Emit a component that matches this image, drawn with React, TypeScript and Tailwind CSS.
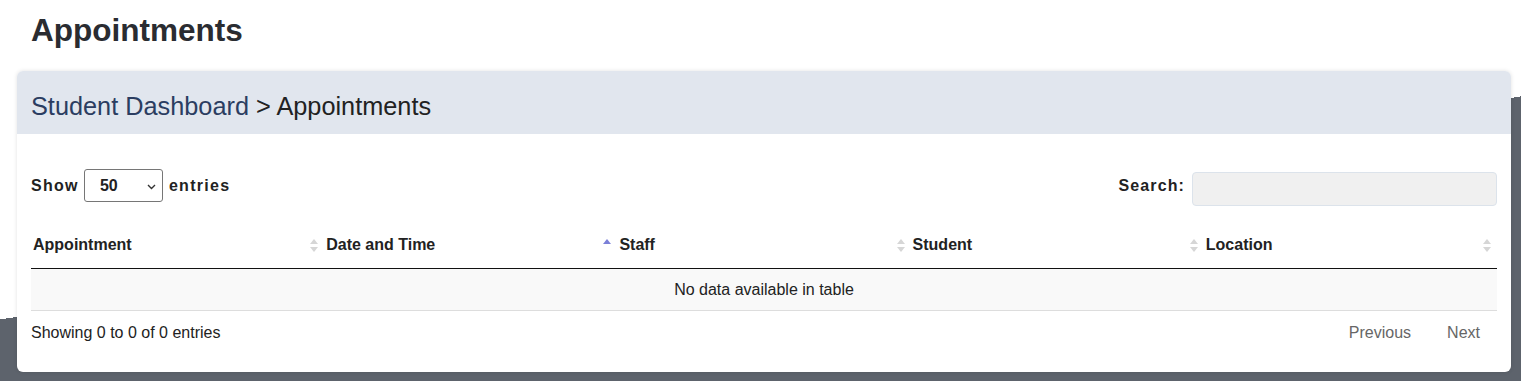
import React from "react";

const columns = ["Appointment", "Date and Time", "Staff", "Student", "Location"];

const SortIcon = ({ active }: { active?: boolean }) => {
    return (
        <svg width="8" height="15" viewBox="0 0 8 15" className="shrink-0">
            {active ? (
                <path d="M0 6 L4 1 L8 6 Z" fill="#7b80d8" />
            ) : (
                <>
                    <path d="M0 6 L4 1 L8 6 Z" fill="#d6d6d6" />
                    <path d="M0 9 L4 14 L8 9 Z" fill="#d6d6d6" />
                </>
            )}
        </svg>
    );
};

const App: React.FC = () => {
    return (
        <div className="min-h-screen w-full bg-[linear-gradient(171.66deg,#ffffff_316px,#5d636c_316px)] font-['Liberation_Sans',Arial,sans-serif] text-[#222]">
            {/* PAGE TITLE */}
            <h1 className="pl-[31px] pt-[12px] text-[31.5px] leading-[37px] font-bold text-[#2a2c31]">Appointments</h1>

            {/* CARD */}
            <div className="mx-[17px] mt-[22px] w-[1494px] rounded-[6px] bg-white shadow-[0_0_4px_rgba(0,0,0,0.12)]">
                <div className="flex h-[63px] items-center rounded-t-[6px] bg-[#e1e6ee] px-[14px] pt-[9px] text-[25.3px]">
                    <span className="text-[#2b3d61]">Student Dashboard</span>
                    <span className="ml-[7px] text-[#222]">&gt; Appointments</span>
                </div>

                <div className="px-[14px] pt-[35px] pb-[21px]">
                    {/* CONTROLS */}
                    <div className="flex items-start justify-between">
                        <div className="flex h-[33px] items-center text-[16px] font-bold tracking-[1.3px] text-[#222]">
                            <span>Show</span>
                            <div className="relative ml-[5px] mr-[6px] flex h-[33px] w-[79px] items-center rounded-[3px] border border-[#767676] pl-[15px] tracking-normal">
                                <span className="text-[16px] font-bold">50</span>
                                <svg width="9" height="6" viewBox="0 0 9 6" className="absolute right-[6px] top-[14px]">
                                    <path d="M1 1 L4.5 4.5 L8 1" fill="none" stroke="#333" strokeWidth="1.4" />
                                </svg>
                            </div>
                            <span>entries</span>
                        </div>
                        <div className="flex items-start">
                            <span className="h-[33px] text-[16px] leading-[33px] font-bold tracking-[1.1px]">Search:</span>
                            <div className="ml-[7px] mt-[3px] h-[34px] w-[305px] rounded-[4px] border border-[#dce3eb] bg-[#f0f0f0]"></div>
                        </div>
                    </div>

                    {/* TABLE */}
                    <div className="mt-[16px]">
                        <div className="grid grid-cols-5 border-b border-[#111]">
                            {columns.map((col, i) => (
                                <div key={col} className="flex items-center justify-between py-[14px] pl-[2px] pr-[6px] text-[16px] leading-[18px] font-bold">
                                    <span>{col}</span>
                                    <SortIcon active={i === 1} />
                                </div>
                            ))}
                        </div>
                        <div className="flex h-[42px] items-center justify-center border-b border-[#ddd] bg-[#f9f9f9] text-[16px]">
                            No data available in table
                        </div>
                    </div>

                    {/* FOOTER */}
                    <div className="mt-[4px] flex items-center justify-between text-[16px] leading-[18px]">
                        <span>Showing 0 to 0 of 0 entries</span>
                        <div className="flex">
                            <span className="ml-[2px] border border-transparent px-[16px] py-[8px] text-[#666]">Previous</span>
                            <span className="ml-[2px] border border-transparent px-[16px] py-[8px] text-[#666]">Next</span>
                        </div>
                    </div>
                </div>
            </div>
        </div>
    );
};

export default App;
